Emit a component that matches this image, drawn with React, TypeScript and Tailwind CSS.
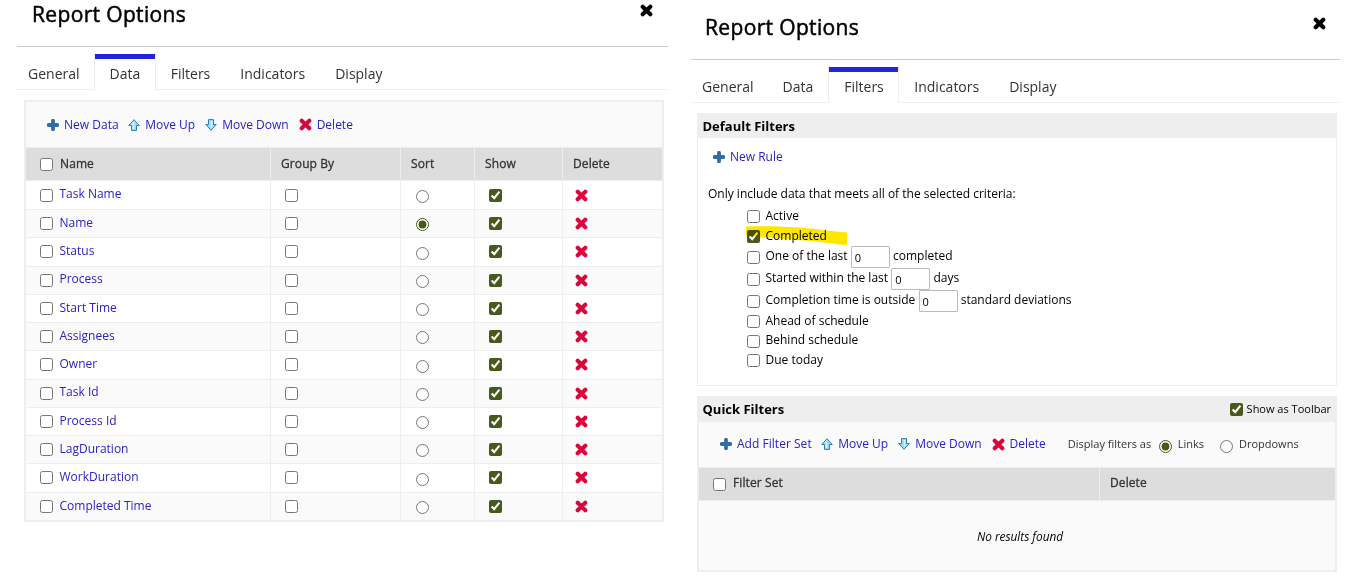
import { ReactNode } from "react";
import clsx from "clsx";

const tabs = ["General", "Data", "Filters", "Indicators", "Display"];

const columns = [
	"Task Name",
	"Name",
	"Status",
	"Process",
	"Start Time",
	"Assignees",
	"Owner",
	"Task Id",
	"Process Id",
	"LagDuration",
	"WorkDuration",
	"Completed Time",
];

const criteria = [
	{ label: "Active", row: "h-[19px]" },
	{ label: "Completed", row: "h-5", checked: true },
	{ label: "One of the last", row: "h-[22px]", suffix: "completed" },
	{ label: "Started within the last", row: "h-[22px]", suffix: "days" },
	{ label: "Completion time is outside", row: "h-[22px]", suffix: "standard deviations" },
	{ label: "Ahead of schedule", row: "h-[19px]" },
	{ label: "Behind schedule", row: "h-5" },
	{ label: "Due today", row: "h-[19px]" },
];

export default function App() {
	return (
		<div className="flex h-[577px] w-[1345px] items-start overflow-hidden bg-white pl-[17px] font-['Open_Sans','Noto_Sans',sans-serif] text-[12px] leading-4 text-black">
			<section className="w-[651px]">
				<Header className="h-[47px] pt-[1px] pr-[15px] pl-[15px]" />
				<TabBar active="Data" />
				<DataTable />
			</section>
			<section className="ml-[23px] w-[649px]">
				<Header className="h-[60px] pt-[14px] pr-[14px] pl-[14px]" />
				<TabBar active="Filters" />
				<DefaultFilters />
				<QuickFilters />
			</section>
		</div>
	);
}

const Header = ({ className }: { className: string }) => (
	<header className={clsx("flex items-start justify-between border-b border-[#ccc]", className)}>
		<h1 className="text-[21px] leading-[26px] tracking-[0.35px] [-webkit-text-stroke:0.5px_black]">Report Options</h1>
		<Cross className="mt-[3px] size-[13px] text-black" />
	</header>
);

const TabBar = ({ active }: { active: string }) => (
	<nav className="flex h-[43px] items-end text-[14px] leading-5 text-[#333]">
		{tabs.map((tab) => (
			<div
				key={tab}
				className={clsx(
					"flex h-9 items-center border-b",
					tab === "General" && "pr-[14px] pl-[11px]",
					tab === active
						? "border-x border-x-[#eee] border-b-transparent pr-[14.5px] pl-[15px] shadow-[inset_0_5px_0_#2323dc]"
						: "border-[#eee]",
					tab !== "General" && tab !== active && "px-[15px]"
				)}
			>
				<span className="pt-[5px]">{tab}</span>
			</div>
		))}
		<div className="h-9 grow border-b border-[#eee]" />
	</nav>
);

const Check = ({ checked, className }: { checked?: boolean; className?: string }) => (
	<input
		type="checkbox"
		defaultChecked={checked}
		className={clsx("size-[13px] shrink-0 accent-[#475a1b]", className)}
	/>
);

const Radio = ({ checked, name, className }: { checked?: boolean; name: string; className?: string }) => (
	<input
		type="radio"
		name={name}
		defaultChecked={checked}
		className={clsx("size-[13px] shrink-0 accent-[#475a1b]", className)}
	/>
);

const Cross = ({ className }: { className: string }) => (
	<svg viewBox="0 0 13 13" className={clsx("shrink-0", className)}>
		<path d="M2.7 2.7 10.3 10.3M10.3 2.7 2.7 10.3" stroke="currentColor" strokeWidth="4.1" strokeLinecap="round" />
	</svg>
);

const Plus = () => (
	<svg viewBox="0 0 12 12" className="size-3 shrink-0">
		<path d="M6 1.7V10.3M1.7 6H10.3" stroke="#2f6ca8" strokeWidth="3.8" strokeLinecap="round" />
	</svg>
);

const Arrow = ({ down }: { down?: boolean }) => (
	<svg viewBox="0 0 12 12" className={clsx("size-3 shrink-0", down && "rotate-180")}>
		<path d="M6 .7 11.2 6.5H8.5V11.4H3.5V6.5H.8Z" fill="#9fdcf8" stroke="#2f7cba" strokeWidth="1" strokeLinejoin="round" />
		<path d="M5.4 3.4V10" stroke="#e2f8ff" strokeWidth="1.4" />
	</svg>
);

const Action = ({ icon, children, className }: { icon: ReactNode; children: string; className?: string }) => (
	<a className={clsx("flex items-center whitespace-nowrap text-[#2a22c4]", className)}>
		{icon}
		<span className="ml-[5px]">{children}</span>
	</a>
);

const Toolbar = ({ first, children, className }: { first: string; children?: ReactNode; className?: string }) => (
	<div className={clsx("flex h-[46px] items-center border-b border-[#eee] bg-[#fafafa] pl-[21px]", className)}>
		<Action icon={<Plus />} className="tracking-[0.03px]">{first}</Action>
		<Action icon={<Arrow />} className="ml-[9.5px]">Move Up</Action>
		<Action icon={<Arrow down />} className="ml-[10px]">Move Down</Action>
		<Action icon={<Cross className="size-[13px] text-[#d9063c]" />} className="ml-[10px]">Delete</Action>
		{children}
	</div>
);

const grid = "grid grid-cols-[245px_130px_74px_88px_99px]";
const cell = "flex items-center border-r border-[#eee] last:border-r-0";
const head = "border-b border-[#eee] bg-[#ddd] tracking-[0.1px] text-[#333] [-webkit-text-stroke:0.3px_#333]";

const DataTable = () => (
	<div className="mt-[10px] ml-[7px] w-[640px] border-2 border-[#eee]">
		<Toolbar first="New Data" />
		<div className={clsx(grid, head, "h-[33px]")}>
			<div className={clsx(cell, "pl-[14px]")}>
				<Check />
				<span className="ml-[7px]">Name</span>
			</div>
			<div className={clsx(cell, "pl-[10px]")}>Group By</div>
			<div className={clsx(cell, "pl-[10px]")}>Sort</div>
			<div className={clsx(cell, "pl-[10px]")}>Show</div>
			<div className={clsx(cell, "pl-[10px]")}>Delete</div>
		</div>
		<div>
			{columns.map((name) => (
				<div
					key={name}
					className={clsx(
						grid,
						"h-[28.25px] border-b border-[#eee] first:h-[29px] last:h-[27.5px] last:border-b-0 odd:bg-white even:bg-[#fafafa]"
					)}
				>
					<div className={clsx(cell, "pl-[14px]")}>
						<Check />
						<a className="-mt-[1.4px] ml-[6.5px] text-[#2a22c4]">{name}</a>
					</div>
					<div className={clsx(cell, "pl-[14px]")}>
						<Check />
					</div>
					<div className={clsx(cell, "pl-[15px]")}>
						<Radio name="sort" checked={name === "Name"} className="mt-[2.5px]" />
					</div>
					<div className={clsx(cell, "pl-[14px]")}>
						<Check checked />
					</div>
					<div className={clsx(cell, "pl-[11.5px]")}>
						<Cross className="size-[13px] text-[#d9063c]" />
					</div>
				</div>
			))}
		</div>
	</div>
);

const DefaultFilters = () => (
	<div className="mt-[10px] ml-[6px] h-[273px] w-[640px] border border-[#eee]">
		<h2 className="h-6 bg-[#eee] pt-[4px] pl-[4.5px] text-[13px] font-bold">Default Filters</h2>
		<div className="pt-[11px] pl-[15px]">
			<Action icon={<Plus />}>New Rule</Action>
		</div>
		<p className="mt-[21px] ml-[10px]">Only include data that meets all of the selected criteria:</p>
		<div className="relative mt-[4px] ml-[49px]">
			{criteria.map(({ label, row, suffix, checked }) => (
				<div key={label} className={clsx("flex items-center whitespace-nowrap", row)}>
					<Check checked={checked} className="mt-[2px]" />
					<span className={clsx("ml-[5.5px]", checked && "mt-[2px]")}>{label}</span>
					{suffix && (
						<>
							<input
								defaultValue="0"
								className="mx-[3.2px] mt-[2px] h-[22px] w-[39px] shrink-0 rounded-[1px] border border-[#bbb] bg-white pl-[3px] text-[11px]"
							/>
							<span>{suffix}</span>
						</>
					)}
				</div>
			))}
			<svg viewBox="0 0 102 20" className="absolute top-5 -left-px h-5 w-[102px] mix-blend-multiply">
				<path d="M0 .5C25-.5 60 1 80 4.5L101 6.5V18.8C90 19 80 16 65 15C45 14 30 12 14 11.5L0 9Z" fill="#ffe600" />
			</svg>
		</div>
	</div>
);

const QuickFilters = () => (
	<div className="mt-[10px] ml-[6px] w-[640px] border-2 border-t-0 border-[#eee]">
		<div className="flex h-[26px] items-center justify-between bg-[#eee] pr-1 pl-[3.5px]">
			<h2 className="text-[13px] font-bold">Quick Filters</h2>
			<label className="flex items-center text-[11px]">
				<Check checked />
				<span className="ml-[3.5px]">Show as Toolbar</span>
			</label>
		</div>
		<Toolbar first="Add Filter Set" className="pb-px">
			<div className="ml-[22px] flex items-center text-[11px] whitespace-nowrap text-[#333]">
				<span>Display filters as</span>
				<Radio name="display" checked className="mt-[5px] ml-[7.5px]" />
				<span className="ml-[6px]">Links</span>
				<Radio name="display" className="mt-[5px] ml-4" />
				<span className="ml-[6px]">Dropdowns</span>
			</div>
		</Toolbar>
		<div className={clsx("flex h-[33px]", head)}>
			<div className={clsx(cell, "w-[401px] pl-[14px]")}>
				<Check className="mt-px" />
				<span className="-mt-[2px] ml-[7px]">Filter Set</span>
			</div>
			<div className="pt-[7px] pl-[10px]">Delete</div>
		</div>
		<div className="flex h-[69px] items-center justify-center bg-[#fafafa] pl-[6px] text-[11.8px] italic">No results found</div>
	</div>
);
